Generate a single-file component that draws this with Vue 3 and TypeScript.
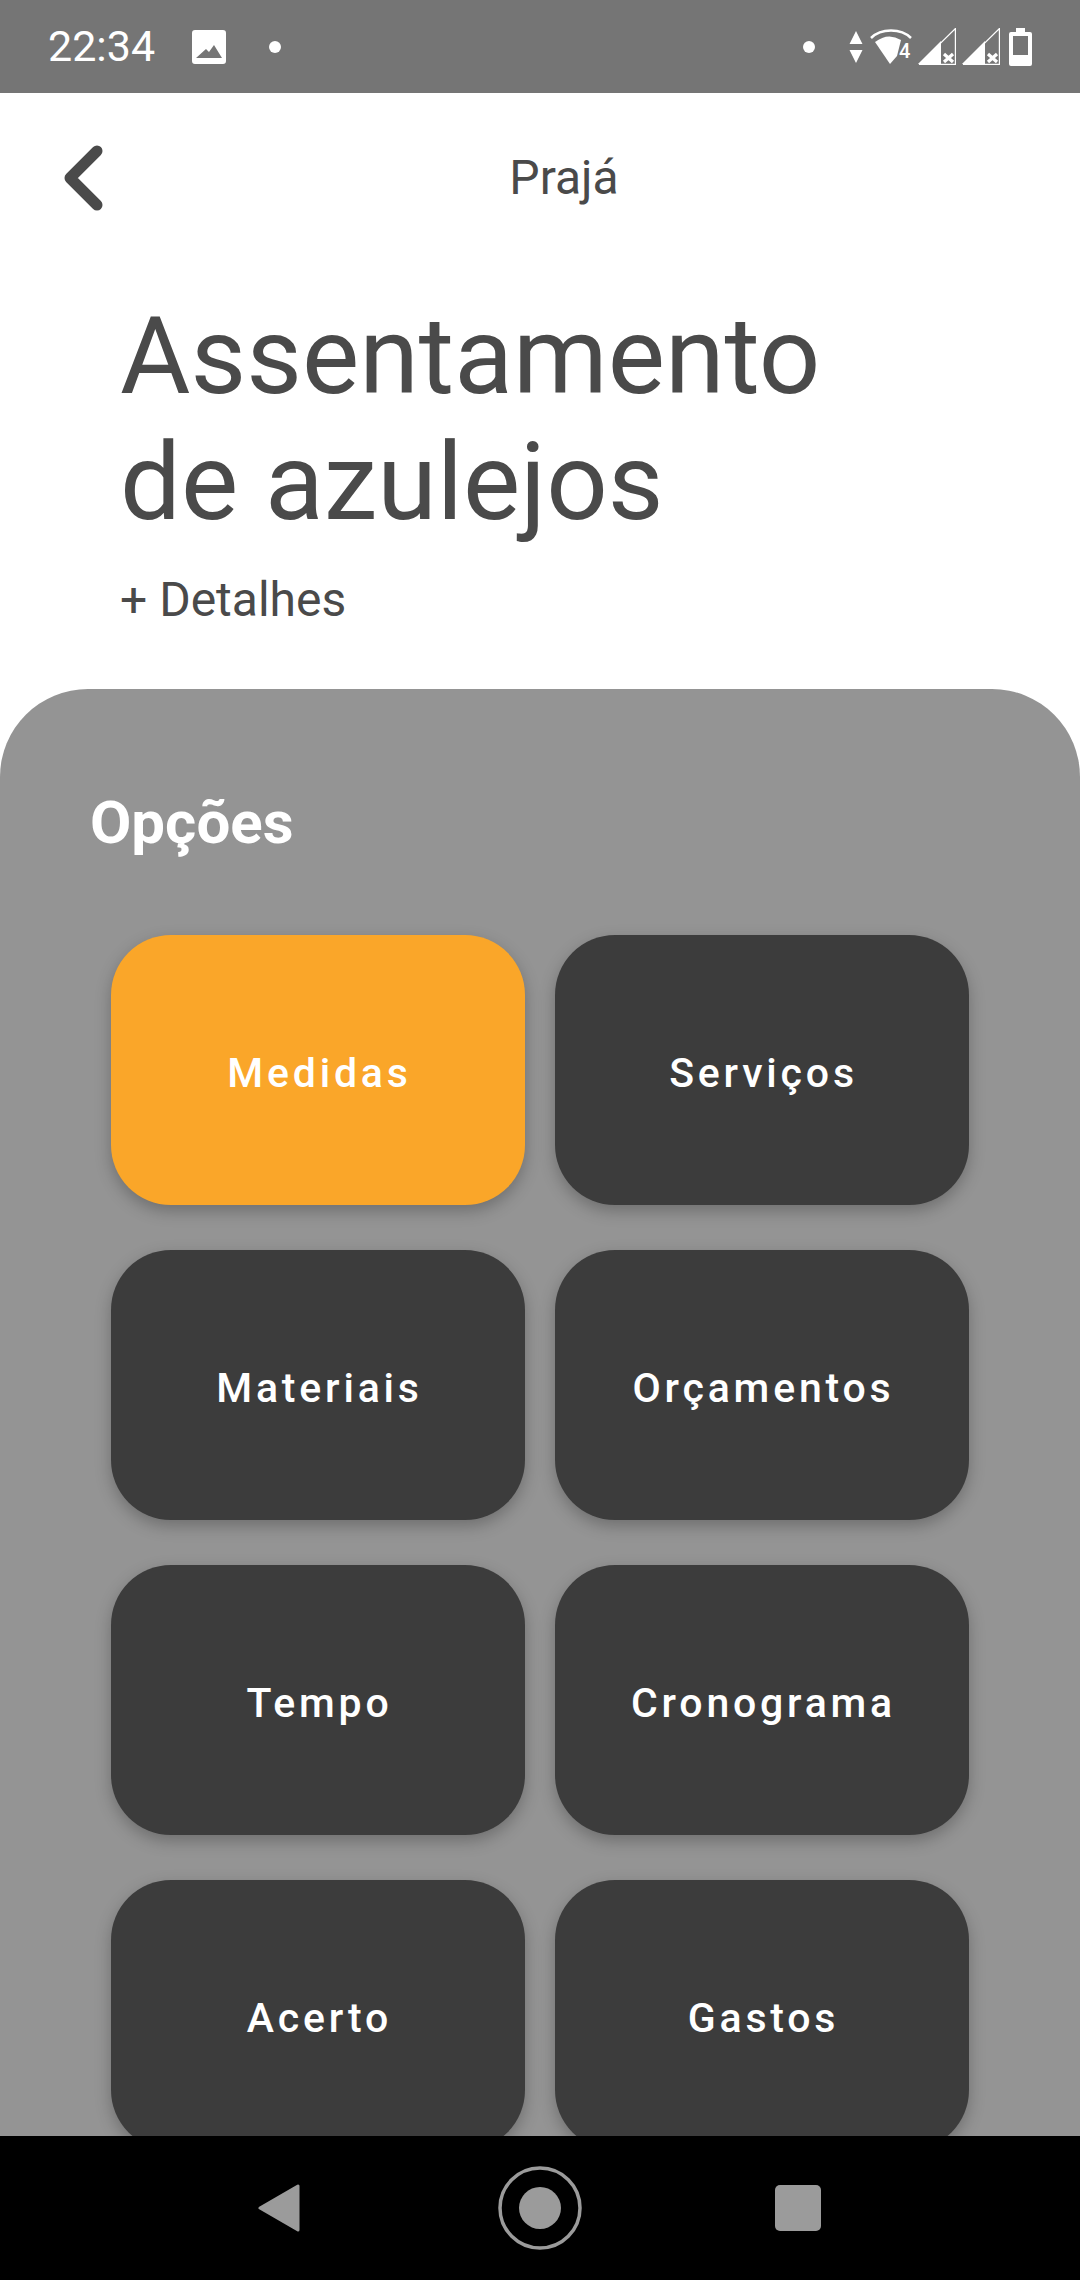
<script setup lang="ts">
const options = [
  { label: 'Medidas', active: true },
  { label: 'Serviços' },
  { label: 'Materiais' },
  { label: 'Orçamentos' },
  { label: 'Tempo' },
  { label: 'Cronograma' },
  { label: 'Acerto' },
  { label: 'Gastos' },
]
</script>

<template>
  <div class="screen">
    <!-- Status bar -->
    <div class="status-bar">
      <span class="time">22:34</span>
      <svg class="ic-image" viewBox="0 0 34 34">
        <path fill-rule="evenodd" fill="#fff" d="M3 0h28a3 3 0 0 1 3 3v28a3 3 0 0 1-3 3H3a3 3 0 0 1-3-3V3a3 3 0 0 1 3-3zM4 28h26l-8-13-5 7-3-3z" />
      </svg>
      <span class="dot dot-left"></span>
      <span class="spacer"></span>
      <span class="dot dot-right"></span>
      <svg class="ic-updown" viewBox="0 0 14 32">
        <path fill="#fff" d="M7 0l6.500 13H0.500zM0.500 19h13L7 32z" />
      </svg>
      <svg class="ic-wifi" viewBox="0 0 42 36">
        <path fill="none" stroke="#fff" stroke-width="2.500" d="M1 9C11 -1 31 -1 41 9" />
        <path fill="#fff" d="M5 13Q18 3 31 11L27 27L20 35z" />
        <text x="29" y="29" class="wifi-four">4</text>
      </svg>
      <svg class="ic-signal" viewBox="0 0 38 37">
        <path fill="#fff" d="M0 36L23 13V36z" />
        <path fill="none" stroke="#fff" stroke-width="1.200" d="M1 36.400H37.400V0.500L1 36.400" />
        <path fill="none" stroke="#fff" stroke-width="3.200" d="M26 26l9 8M35 26l-9 8" />
      </svg>
      <svg class="ic-signal" viewBox="0 0 38 37">
        <path fill="#fff" d="M0 36L23 13V36z" />
        <path fill="none" stroke="#fff" stroke-width="1.200" d="M1 36.400H37.400V0.500L1 36.400" />
        <path fill="none" stroke="#fff" stroke-width="3.200" d="M26 26l9 8M35 26l-9 8" />
      </svg>
      <svg class="ic-battery" viewBox="0 0 23 38">
        <path fill-rule="evenodd" fill="#fff" d="M7 0h9v4h5a2 2 0 0 1 2 2v30a2 2 0 0 1-2 2H2a2 2 0 0 1-2-2V6a2 2 0 0 1 2-2h5zM4 8v19h15V8z" />
      </svg>
    </div>

    <!-- Top -->
    <div class="header">
      <svg class="back" viewBox="0 0 40 66">
        <path d="M33 6L6 33l27 27" fill="none" stroke="#4a4a4a" stroke-width="11" stroke-linecap="round" stroke-linejoin="round" />
      </svg>
      <span class="header-title">Prajá</span>
    </div>

    <div class="intro">
      <h1 class="title">Assentamento<br />de azulejos</h1>
      <p class="details">+ Detalhes</p>
    </div>

    <!-- Options panel -->
    <div class="panel">
      <h2 class="panel-title">Opções</h2>
      <div class="grid">
        <div v-for="opt in options" :key="opt.label" class="card" :class="{ active: opt.active }">
          {{ opt.label }}
        </div>
      </div>
    </div>

    <!-- Nav bar -->
    <div class="nav-bar">
      <svg class="nav-back" viewBox="0 0 42 48">
        <path d="M40 2v44L2 24z" fill="#9b9b9b" stroke="#9b9b9b" stroke-width="3" stroke-linejoin="round" />
      </svg>
      <svg class="nav-home" viewBox="0 0 84 84">
        <circle cx="42" cy="42" r="40" fill="none" stroke="#9b9b9b" stroke-width="3.500" />
        <circle cx="42" cy="42" r="21" fill="#9b9b9b" />
      </svg>
      <span class="nav-square"></span>
    </div>
  </div>
</template>

<style>
html,
body {
  margin: 0;
  background: #fff;
}
</style>

<style scoped>
.screen {
  width: 1080px;
  height: 2280px;
  display: flex;
  flex-direction: column;
  overflow: hidden;
  font-family: Roboto, "Liberation Sans", sans-serif;
  background: #fff;
}

.status-bar {
  height: 93px;
  flex: none;
  display: flex;
  align-items: center;
  background: #757575;
  padding-left: 48px;
  padding-right: 48px;
  box-sizing: border-box;
}

.time {
  width: 107px;
  font-size: 43px;
  color: #fff;
  line-height: 1;
  margin-top: -1px;
}

.ic-image {
  width: 34px;
  height: 34px;
  margin-left: 37px;
}

.dot {
  width: 12px;
  height: 12px;
  border-radius: 50%;
  background: #fff;
}

.dot-left {
  margin-left: 43px;
}

.spacer {
  flex: 1;
}

.ic-updown {
  width: 14px;
  height: 32px;
  margin-left: 34px;
}

.ic-wifi {
  width: 42px;
  height: 36px;
  margin-left: 7px;
}

.wifi-four {
  font-size: 20px;
  font-weight: 500;
  fill: #fff;
}

.ic-signal {
  width: 38px;
  height: 37px;
  margin-left: 6px;
}

.ic-battery {
  width: 23px;
  height: 38px;
  margin-left: 9px;
}

.header {
  height: 170px;
  flex: none;
  display: flex;
  align-items: center;
  padding-left: 64px;
  box-sizing: border-box;
}

.back {
  width: 40px;
  height: 66px;
}

.header-title {
  flex: 1;
  margin-right: 56px;
  text-align: center;
  font-size: 48px;
  color: #4a4a4a;
  margin-top: -2px;
}

.intro {
  flex: none;
  height: 426px;
  padding-top: 30px;
  padding-left: 120px;
  box-sizing: border-box;
  color: #4a4a4a;
}

.title {
  margin: 0;
  font-size: 108px;
  font-weight: 400;
  line-height: 126px;
}

.details {
  margin: 28px 0 0;
  font-size: 48px;
  line-height: 54px;
}

.panel {
  flex: 1;
  min-height: 0;
  overflow: hidden;
  background: #949494;
  border-radius: 88px 88px 0 0;
  padding: 102px 111px 0 90px;
  box-sizing: border-box;
}

.panel-title {
  margin: 0;
  font-size: 60px;
  font-weight: 700;
  line-height: 64px;
  color: #fff;
}

.grid {
  display: grid;
  grid-template-columns: 414px 414px;
  grid-auto-rows: 270px;
  column-gap: 30px;
  row-gap: 45px;
  margin-top: 80px;
  margin-left: 21px;
}

.card {
  display: flex;
  align-items: center;
  justify-content: center;
  border-radius: 60px;
  background: #3c3c3c;
  color: #fff;
  font-size: 41px;
  font-weight: 500;
  letter-spacing: 3.800px;
  padding: 6px 0 0 3px;
  box-sizing: border-box;
  box-shadow: 0 6px 16px rgba(0, 0, 0, 0.25);
}

.card.active {
  background: #faa629;
}

.nav-bar {
  height: 144px;
  flex: none;
  display: flex;
  align-items: center;
  background: #000;
  padding-left: 258px;
}

.nav-back {
  width: 42px;
  height: 48px;
}

.nav-home {
  width: 84px;
  height: 84px;
  margin-left: 198px;
}

.nav-square {
  width: 46px;
  height: 46px;
  border-radius: 5px;
  background: #9b9b9b;
  margin-left: 193px;
}
</style>
